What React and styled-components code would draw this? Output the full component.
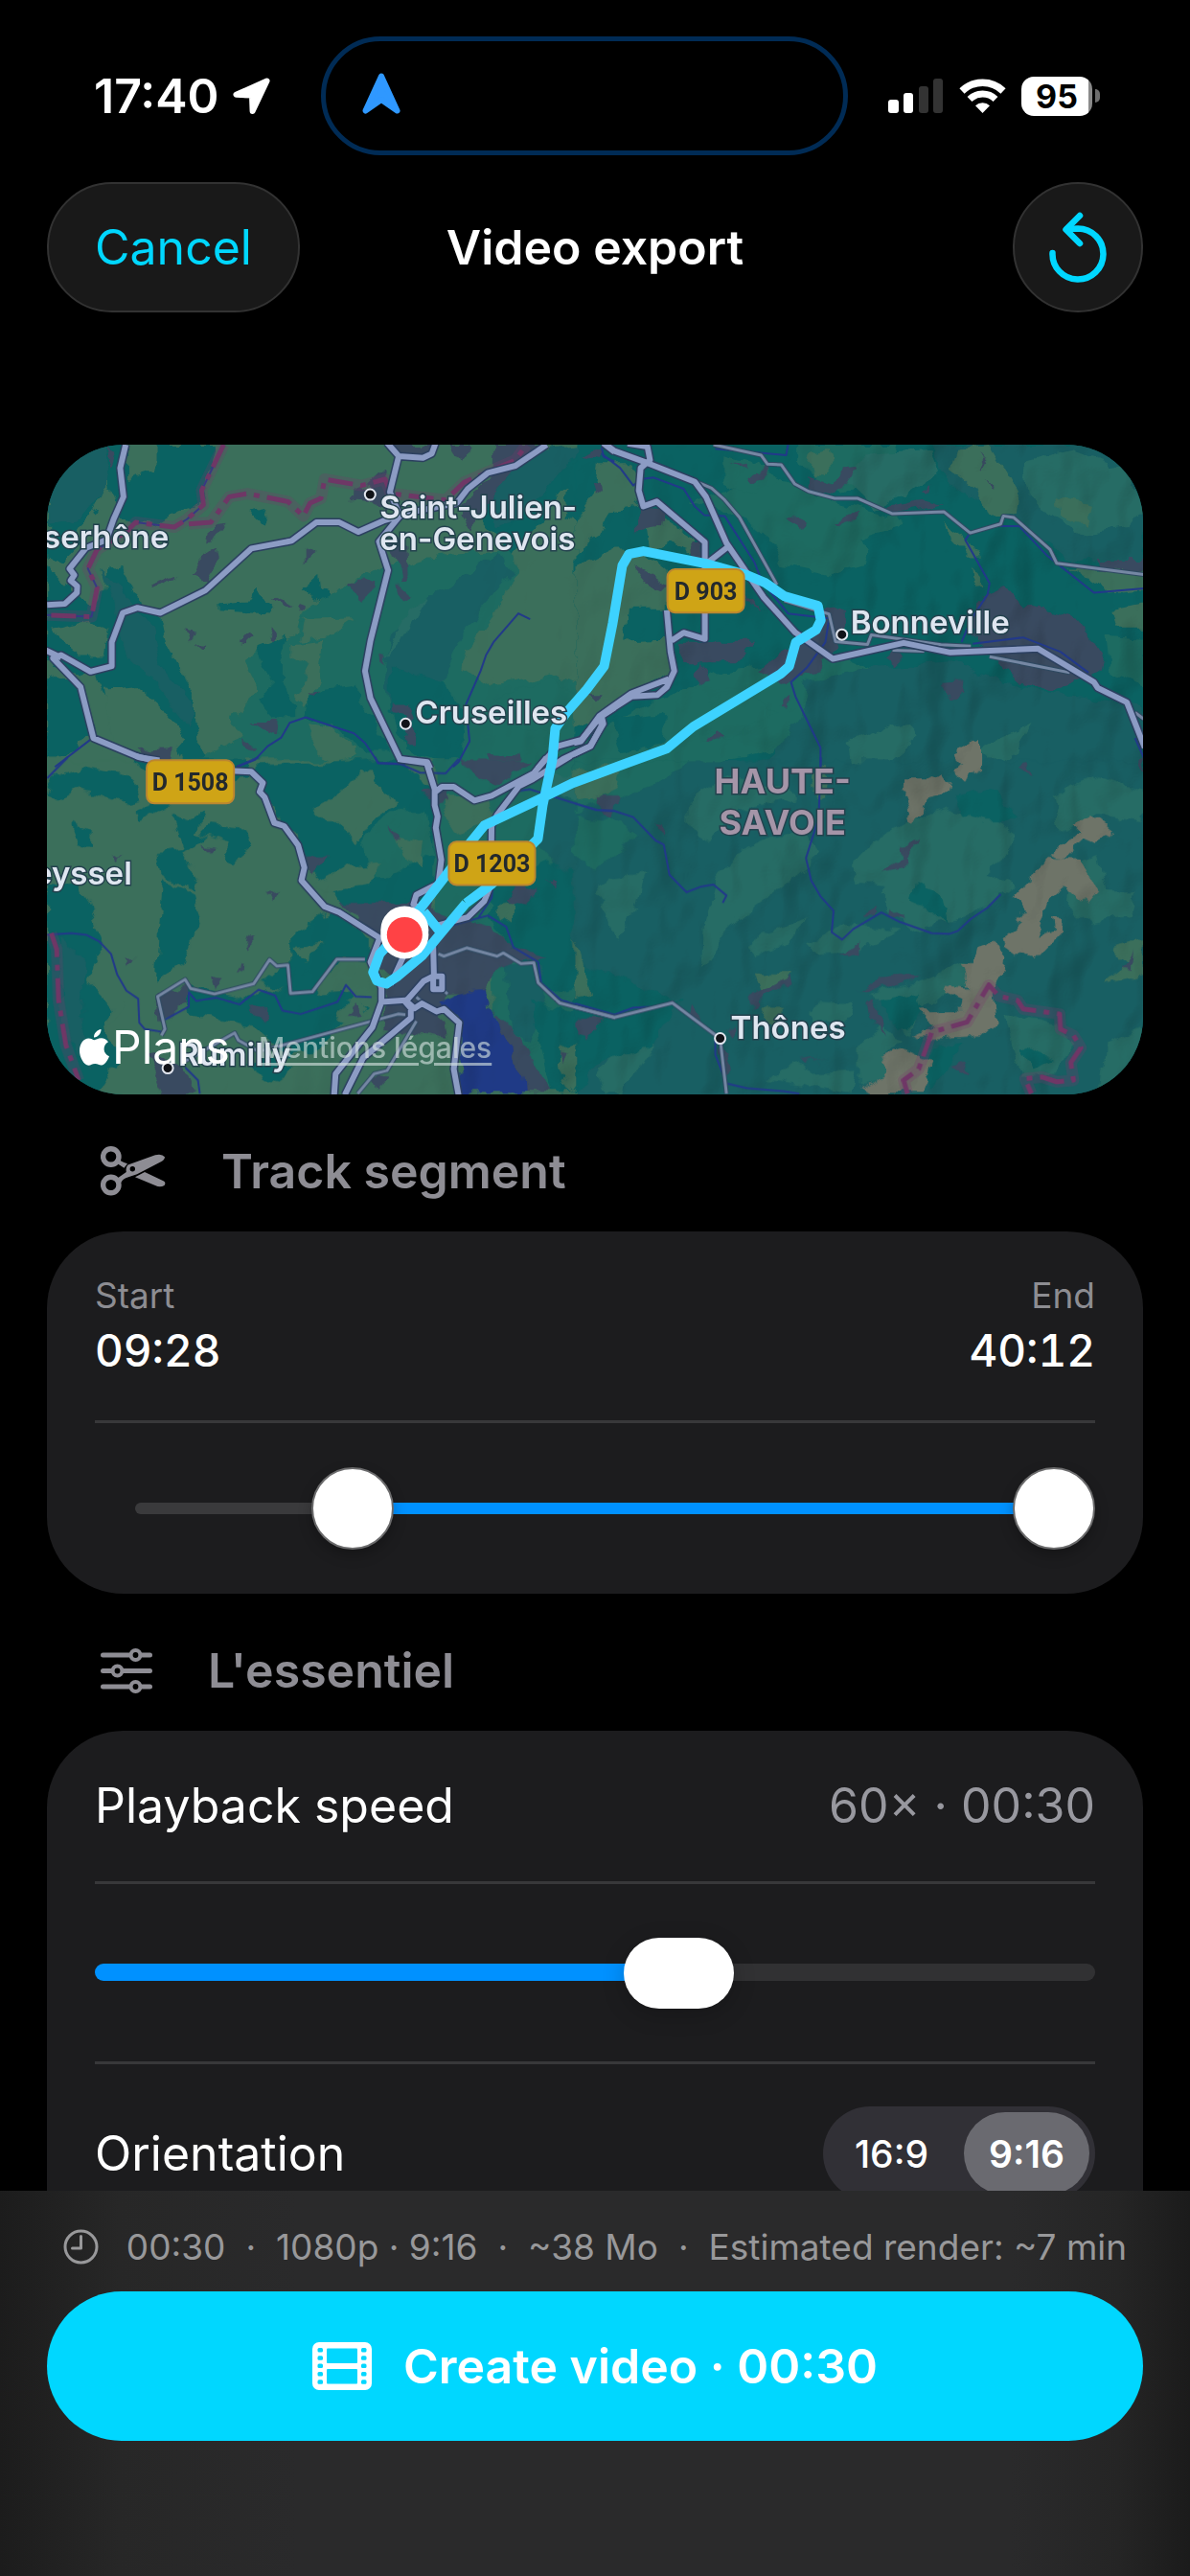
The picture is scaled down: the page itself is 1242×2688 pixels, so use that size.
import { useState } from "react";
import styled, { createGlobalStyle } from "styled-components";

const GlobalStyle = createGlobalStyle`
  * {
    box-sizing: border-box;
  }

  body {
    margin: 0;
    background: #000;
    color: #fff;
    font-family: Inter, "Liberation Sans", sans-serif;
  }

  button,
  input {
    font: inherit;
  }
`;

const Screen = styled.div`
  display: flex;
  flex-direction: column;
  height: 100vh;
  background: #000;
`;

/* ---------- status bar ---------- */

const StatusBar = styled.div`
  display: grid;
  grid-template-columns: 1fr 550px 1fr;
  align-items: center;
  padding: 38px 22px 0 0;
`;

const StatusLeft = styled.div`
  display: flex;
  align-items: center;
  gap: 14px;
  padding-left: 98px;
`;

const Clock = styled.span`
  font-size: 50px;
  line-height: 62px;
  font-weight: 600;
`;

const Island = styled.div`
  display: flex;
  align-items: center;
  height: 124px;
  padding: 0 38px 6px;
  border: 5px solid #002b55;
  border-radius: 62px;
`;

const StatusRight = styled.div`
  display: flex;
  align-items: center;
  gap: 16px;
  padding-left: 42px;
`;

const Battery = styled.div`
  display: flex;
  align-items: center;
  gap: 3px;
`;

const BatteryBody = styled.div`
  width: 74px;
  height: 41px;
  border-radius: 13px;
  background: linear-gradient(to right, #fff 70px, #8a8a8a 70px);
  color: #000;
  font-size: 34px;
  line-height: 41px;
  font-weight: 700;
  text-align: center;
`;

const BatteryNub = styled.div`
  width: 5px;
  height: 14px;
  border-radius: 0 7px 7px 0;
  background: #6d6d6d;
`;

/* ---------- nav bar ---------- */

const NavBar = styled.header`
  display: grid;
  grid-template-columns: 1fr auto 1fr;
  align-items: center;
  padding: 28px 49px 0;
`;

const GlassButton = styled.button`
  display: flex;
  align-items: center;
  justify-content: center;
  justify-self: ${(props) => (props.$end ? "end" : "start")};
  width: ${(props) => (props.$round ? "136px" : "auto")};
  height: 136px;
  padding: ${(props) => (props.$round ? "0" : "0 48px")};
  border: 2px solid #323232;
  border-radius: 68px;
  background: #191919;
  color: #00d7ff;
  font-size: 50px;
  cursor: pointer;
`;

const NavTitle = styled.h1`
  margin: 0;
  font-size: 50px;
  line-height: 62px;
  font-weight: 600;
`;

/* ---------- content ---------- */

const Content = styled.main`
  flex: 1;
  min-height: 0;
  padding: 138px 49px 0;
  overflow-y: auto;
  scrollbar-width: none;
`;

const MapCard = styled.section`
  position: relative;
  overflow: hidden;
  border-radius: 80px;
  background: #0b6262;

  > svg {
    display: block;
    width: 100%;
    height: auto;
  }
`;

const MapCredits = styled.div`
  position: absolute;
  left: 34px;
  bottom: 21px;
  display: flex;
  align-items: center;
  gap: 30px;
`;

const MapBrand = styled.span`
  display: flex;
  align-items: center;
  gap: 3px;
  font-size: 48px;
  line-height: 56px;
`;

const LegalLink = styled.a`
  color: rgba(214, 228, 226, 0.62);
  font-size: 30px;
  line-height: 40px;
  font-weight: 500;
  text-underline-offset: 5px;
`;

const SectionTitle = styled.h2`
  display: flex;
  align-items: center;
  gap: 58px;
  height: 143px;
  margin: 0;
  padding: 18px 56px 0;
  color: #8e8d94;
  font-size: 50px;
  line-height: 62px;
  font-weight: 600;
`;

const Card = styled.section`
  padding: 0 50px;
  border-radius: 80px;
  background: #1c1c1e;

  &:last-child {
    padding-bottom: 80px;
  }
`;

const Row = styled.div`
  display: flex;
  align-items: center;
  justify-content: space-between;
  height: ${(props) => props.$height}px;

  & + & {
    border-top: 3px solid #38383a;
  }
`;

const RowLabel = styled.span`
  font-size: 50px;
  line-height: 62px;
`;

const RowValue = styled.span`
  color: #98989f;
  font-size: 50px;
  line-height: 62px;
`;

const TimeMark = styled.div`
  display: flex;
  flex-direction: column;
  gap: 6px;
  text-align: ${(props) => (props.$end ? "right" : "left")};
`;

const TimeCaption = styled.span`
  color: #8d8d92;
  font-size: 37px;
  line-height: 46px;
`;

const TimeValue = styled.span`
  font-size: 46px;
  line-height: 56px;
  font-weight: 500;
  font-variant-numeric: tabular-nums;
`;

/* ---------- sliders ---------- */

const Dual = styled.div`
  position: relative;
  flex: 1;
  height: 86px;
  padding: 37px 42px;
`;

const DualTrack = styled.div`
  height: 12px;
  border-radius: 6px;
  background: linear-gradient(
    to right,
    #3a3a3c var(--from),
    #0091ff var(--from),
    #0091ff var(--to),
    #3a3a3c var(--to)
  );
`;

const DualInput = styled.input`
  position: absolute;
  inset: 0;
  width: 100%;
  height: 86px;
  margin: 0;
  appearance: none;
  background: transparent;
  pointer-events: none;

  &::-webkit-slider-thumb {
    appearance: none;
    width: 86px;
    height: 86px;
    border: 2px solid #6b6b6c;
    border-radius: 50%;
    background: #fff;
    box-shadow: 0 6px 14px rgba(0, 0, 0, 0.25);
    pointer-events: auto;
  }
`;

const SpeedInput = styled.input`
  flex: 1;
  height: 74px;
  margin: 0;
  appearance: none;
  background: transparent;

  &::-webkit-slider-runnable-track {
    height: 18px;
    border-radius: 9px;
    background: linear-gradient(
      to right,
      #0091ff var(--fill),
      #313133 var(--fill)
    );
  }

  &::-webkit-slider-thumb {
    appearance: none;
    width: 115px;
    height: 74px;
    margin-top: -27px;
    border-radius: 37px;
    background: #fff;
    box-shadow: 0 6px 24px rgba(0, 0, 0, 0.2);
  }
`;

const Segmented = styled.div`
  display: flex;
  gap: 10px;
  height: 98px;
  padding: 6px;
  border-radius: 49px;
  background: #313036;
`;

const Segment = styled.label`
  display: flex;
  align-items: center;
  justify-content: center;
  width: 131px;
  border-radius: 43px;
  font-size: 39px;
  font-weight: 500;

  &:has(input:checked) {
    background: #6a6a70;
    font-weight: 600;
  }

  input {
    position: absolute;
    opacity: 0;
    pointer-events: none;
  }
`;

/* ---------- footer ---------- */

const Footer = styled.footer`
  height: 402px;
  padding: 32px 49px 0;
  background: linear-gradient(
    to right,
    #1c1c1c,
    #272727 10%,
    #2a2a2b 25%,
    #2a2a2b 85%,
    #252525 94%,
    #1b1b1b
  );
`;

const Summary = styled.div`
  display: flex;
  align-items: center;
  justify-content: center;
  gap: 21px;
  height: 53px;
  margin-bottom: 20px;
  color: #98989a;
  font-size: 37px;
  line-height: 46px;
  white-space: nowrap;

  svg {
    margin-right: 8px;
  }
`;

const CreateButton = styled.button`
  display: flex;
  align-items: center;
  justify-content: center;
  gap: 33px;
  width: 100%;
  height: 156px;
  border: none;
  border-radius: 78px;
  background: #00d7ff;
  color: #fff;
  font-size: 50px;
  font-weight: 600;
  cursor: pointer;
`;

/* ---------- icons ---------- */

const LocationIcon = () => (
  <svg width="39" height="39" viewBox="0 0 39 39" aria-hidden="true">
    <path d="M35.5 3.5 3.5 17.8 20 18.6 20.6 35Z" fill="#fff" stroke="#fff" strokeWidth="6" strokeLinejoin="round" />
  </svg>
);

const HeadingIcon = () => (
  <svg width="40" height="43" viewBox="0 0 40 43" aria-hidden="true">
    <path d="M20 3.5 36.5 39.5 20 28 3.5 39.5Z" fill="#2f98ff" stroke="#2f98ff" strokeWidth="6" strokeLinejoin="round" />
  </svg>
);

const SignalIcon = () => (
  <svg width="58" height="36" viewBox="0 0 58 36" aria-hidden="true">
    <rect x="0" y="22" width="11" height="14" rx="3" fill="#fff" />
    <rect x="16" y="15" width="10" height="21" rx="3" fill="#fff" />
    <rect x="32" y="8" width="10" height="28" rx="3" fill="#333" />
    <rect x="47" y="0" width="10" height="36" rx="3" fill="#333" />
  </svg>
);

const WifiIcon = () => (
  <svg width="49" height="36" viewBox="0 0 49 36" fill="none" stroke="#fff" aria-hidden="true">
    <path d="M3 13A31 31 0 0 1 46 13" strokeWidth="7.5" />
    <path d="M11 21.5A19.5 19.5 0 0 1 38 21.5" strokeWidth="7" />
    <path d="M24.5 36 17 28.3A11 11 0 0 1 32 28.3Z" fill="#fff" stroke="none" />
  </svg>
);

const ResetIcon = () => (
  <svg width="60" height="74" viewBox="0 0 60 74" fill="none" stroke="#00d7ff" strokeWidth="6.5" strokeLinecap="round" strokeLinejoin="round" aria-hidden="true">
    <path d="M3.5 43A26.5 26.5 0 1 0 30 17.5L19 18" />
    <path d="M32 4 17.5 18.5 32 33" />
  </svg>
);

const ScissorsIcon = () => (
  <svg width="68" height="52" viewBox="0 0 68 52" fill="currentColor" aria-hidden="true">
    <g fill="none" stroke="currentColor" strokeWidth="5.4">
      <circle cx="10.8" cy="11" r="8.2" />
      <circle cx="10.8" cy="40.5" r="8.2" />
    </g>
    <path d="M19 12.5Q20 16 28 18.2L24.5 22.8 18 18.5Z" />
    <path
      fillRule="evenodd"
      d="M28.5 19.500 57 9.200Q64 7.500 67 11.200 67 14 63.500 16L38 29.200 29 32.300Q23 34 21.500 38L17.500 33.500 26.800 27Q26 22 28.500 19.500ZM36 23.700A2.700 2.700 0 1 0 30.600 23.700 2.700 2.700 0 1 0 36 23.700Z"
    />
    <path d="M36 32.2 46 27 66 36.5Q68.5 38 66.5 41 62 43.5 57 41Z" />
  </svg>
);

const SlidersIcon = () => (
  <svg width="54" height="47" viewBox="0 0 54 47" fill="#000" stroke="currentColor" strokeLinecap="round" aria-hidden="true">
    <path d="M2.5 7H51.5M2.5 23.5H51.5M2.5 40H51.5" strokeWidth="5" />
    <g strokeWidth="4">
      <circle cx="36.5" cy="7" r="4.9" />
      <circle cx="17.5" cy="23.5" r="4.9" />
      <circle cx="36.5" cy="40" r="4.9" />
    </g>
  </svg>
);

const TimeIcon = () => (
  <svg width="37" height="37" viewBox="0 0 37 37" fill="none" stroke="currentColor" strokeWidth="3" strokeLinecap="round" aria-hidden="true">
    <circle cx="18.5" cy="18.5" r="16.5" />
    <path d="M18.5 7.5V20H9.5" strokeLinejoin="round" />
  </svg>
);

const FilmIcon = () => (
  <svg width="62" height="50" viewBox="0 0 62 50" aria-hidden="true">
    <rect width="62" height="50" rx="7" fill="#fff" />
    <g fill="#00d7ff">
      <rect x="15" y="6.5" width="32" height="15.5" rx="1" />
      <rect x="15" y="28" width="32" height="15.5" rx="1" />
      {[6, 14.2, 22.6, 31, 39.3].map((y) => (
        <g key={y}>
          <rect x="5.5" y={y} width="5.5" height="4.5" rx="1.5" />
          <rect x="51" y={y} width="5.5" height="4.5" rx="1.5" />
        </g>
      ))}
    </g>
  </svg>
);

const AppleIcon = () => (
  <svg width="31" height="38" viewBox="0 0 31 38" fill="#fff" aria-hidden="true">
    <path d="M22.500 0C22.800 4 19 8.600 15 8.400 14.600 4.400 18.600.5 22.500 0Z" />
    <path d="M15.500 11.200C17.300 11.200 19.200 9.300 22.700 9.300 25.500 9.300 28.300 10.800 30 13.300 23.500 17 24.500 25.800 31 28.300 29.600 32 26.500 37.500 23 37.600 20.300 37.700 19.400 36 16.200 36 13 36 12 37.600 9.400 37.700 4.800 37.800 0 29.500 0 22.600 0 14.800 4.700 9.500 9.400 9.500 12.200 9.500 14 11.200 15.500 11.200Z" />
  </svg>
);

/* ---------- map ---------- */

const LAND = {
  green: "#3b6f5b",
  teal: "#0a6262",
  mid: "#1d6b61",
  deep: "#185f63",
  light: "#266c65",
  rock: "#6e7468",
  town: "#394a60",
  lake: "#1f3a86",
};

// The map is split in four tiles, each with its own drawing grid.
const TILES = [
  {
    id: "nw",
    transform: "translate(-9 -14) scale(0.3827 0.3333)",
    land: [
      ["green", "0,0 1570,0 1570,1052 0,1052"],
      ["teal", "24,42 240,42 240,200 215,240 190,150 150,260 100,300 110,360 60,420 24,400"],
      ["deep", "24,42 190,42 200,140 150,240 90,280 24,300"],
      ["teal", "240,150 320,120 320,42 480,42 460,150 440,230 390,250 330,290 260,280 210,270"],
      ["teal", "24,420 85,480 100,520 160,560 190,430 230,420 260,520 330,570 350,680 420,820 420,900 470,1050 400,1050 340,900 200,860 150,760 40,740 24,700"],
      ["deep", "170,440 230,500 300,600 330,720 420,850 410,930 330,800 240,700"],
      ["teal", "24,760 100,800 150,950 40,1050 24,1050"],
      ["green", "40,610 140,590 190,620 180,700 110,700 50,640"],
      ["teal", "500,540 570,535 590,500 640,548 630,568 500,558"],
      ["teal", "720,490 760,450 765,500 840,530 850,560 760,530"],
      ["mid", "720,560 860,470 940,420 1000,420 1090,390 1290,370 1300,430 1250,560 1170,680 1160,740 1240,800 1400,760 1568,850 1568,1050 430,1050 480,1000 560,960 530,900 600,810 560,720 620,670 700,640"],
      ["teal", "590,680 680,640 660,720 660,790 700,860 700,900 640,900 600,850 640,790"],
      ["teal", "730,820 860,800 900,880 960,1000 900,1000 800,920 720,900"],
      ["deep", "960,640 1060,520 1130,480 1250,380 1290,440 1200,560 1140,660 1110,780 960,860 940,740"],
      ["teal", "960,740 1110,790 1160,900 1150,1050 1000,1000 960,880"],
      ["green", "690,660 780,650 770,780 720,860 700,830 740,740 690,710"],
      ["green", "720,590 860,585 790,640 710,650"],
      ["green", "740,920 800,930 860,980 870,1020 800,1040 740,980"],
      ["green", "180,800 260,790 340,870 400,960 370,1000 290,990 210,1050 130,1050 200,970"],
      ["teal", "1180,250 1240,150 1380,60 1568,42 1568,260 1540,330 1480,300 1430,270 1440,180 1400,210 1380,280 1290,380 1240,320"],
      ["deep", "1240,100 1380,60 1480,42 1400,160 1330,260 1250,300 1240,200"],
      ["teal", "1510,330 1568,380 1568,540 1480,540"],
      ["mid", "1250,830 1400,770 1500,860 1420,940 1290,930"],
      ["light", "1010,560 1060,520 1000,640 940,720 980,620"],
      ["teal", "1470,590 1540,640 1480,650"],
      ["teal", "580,250 625,240 610,290"],
      ["town", "420,450 440,400 485,365 492,410 460,470"],
      ["town", "300,484 380,452 375,470 305,495"],
      ["town", "845,470 920,470 915,490 885,525 855,500"],
      ["town", "975,480 1015,520 995,535 980,510"],
      ["town", "860,180 900,165 940,120 960,200 945,250 905,225 858,220"],
      ["town", "955,330 1000,340 1005,480 990,480 975,400"],
      ["town", "1150,250 1180,190 1240,130 1240,42 1380,42 1300,110 1250,180 1200,280 1180,310"],
      ["town", "955,42 1080,42 1050,80 985,75"],
      ["town", "545,655 570,622 585,635 560,660"],
      ["town", "640,618 650,640 640,660 628,655"],
      ["town", "400,615 428,625 415,658"],
      ["town", "435,660 465,662 452,677"],
      ["town", "640,518 690,540 660,548"],
      ["town", "725,370 745,385 725,418"],
      ["town", "470,300 500,290 480,330 465,350"],
      ["town", "965,850 1010,850 1030,940 1025,975 995,975 1005,890 965,880"],
      ["town", "575,905 655,905 650,945 610,930"],
      ["town", "270,995 365,990 360,1030 300,1025"],
      ["town", "1220,1010 1310,1015 1290,1050 1250,1050"],
      ["town", "1490,828 1535,820 1515,848"],
      ["town", "1120,42 1175,42 1150,95"],
      ["town", "1480,85 1510,50 1518,85"],
      ["town", "195,50 220,60 205,110"],
      ["town", "705,535 730,545 712,562"],
      ["town", "930,700 945,710 935,740"],
      ["town", "740,815 765,812 750,828"],
      ["town", "555,965 600,995 580,1000"],
    ],
    rivers:
      "M505 42 445 185 450 230 405 275 370 300 265 285 240 315 160 370 135 430 160 490 145 580 24 575M1340 588 1308 570 1240 660 1220 700 1205 750 1165 855 1175 970 1145 1035 1130 1050M45 1050 145 962M540 1050 590 1028 625 985 662 958 685 912 728 895 860 945 890 975 927 1038 1000 1042M1535 50 1540 80 1570 95",
    border:
      "M505 42 445 185 450 230 405 275 370 300 265 285 240 315 160 370 135 430 160 490 145 580 24 575M410 290 470 285 520 205 570 195 680 220 722 265 740 225 770 210 780 150 880 170 945 150 960 195 1110 215 1160 160 1220 130 1300 90 1330 42",
    minor: "",
    roads:
      "M238 42 223 115 232 205 205 275 185 340 130 365 85 430 98 450 88 467 106 485 105 505 72 540 24 543M1385 42 1300 108 1225 130 1170 180 1140 225 1030 250 940 280 872 315 820 285 757 285 690 343 580 367 455 498 332 568 270 552 230 568 200 660 200 735 142 752 62 700 40 710 115 800 150 960 275 1020 330 1030M20 685 62 708M950 36 982 78 958 190 985 265 928 345 953 435 905 655 890 750 905 835 985 1025 1060 1035 1068 1055M982 78 1048 83 1072 70 1082 38M1570 865 1530 895 1480 965 1415 985 1360 1055M1530 895 1535 920 1505 985 1430 1025 1395 1052M1540 38 1570 65",
  },
  {
    id: "ne",
    transform: "translate(551 -14) scale(0.3891 0.3333)",
    land: [
      ["teal", "0,0 1530,0 1530,1052 0,1052"],
      ["green", "60,100 140,100 180,180 160,240 90,250 60,330 0,370 0,280 50,200"],
      ["green", "0,430 100,370 180,370 250,440 245,640 270,740 140,830 60,900 0,930"],
      ["teal", "140,560 245,560 245,650 130,655"],
      ["green", "220,260 320,330 320,380 250,350 200,380 190,300"],
      ["mid", "300,220 400,190 500,140 600,170 700,220 860,265 880,300 760,340 780,420 690,450 560,420 520,340 440,260"],
      ["mid", "600,42 860,42 840,120 720,200 650,160 600,100"],
      ["mid", "400,70 520,110 550,160 480,200 400,160"],
      ["deep", "960,42 1300,42 1523,42 1523,420 1320,400 1180,280 1120,260 1000,160"],
      ["light", "780,70 960,60 980,120 880,200 800,240 720,150"],
      ["green", "1020,60 1110,42 1190,200 1185,260 1100,270 1070,180 1005,120"],
      ["green", "640,70 680,60 690,100 640,150 630,110"],
      ["light", "1200,100 1330,60 1480,120 1523,240 1480,300 1360,320 1280,260 1210,210"],
      ["green", "1290,200 1380,230 1370,290 1300,260"],
      ["green", "990,290 1040,330 1080,400 1060,400 1010,340"],
      ["green", "1065,420 1090,450 1090,490 1070,470"],
      ["mid", "400,750 560,730 700,700 820,760 960,820 860,900 700,940 520,1000 300,1052 0,1052 0,980 200,850"],
      ["deep", "620,780 800,740 1000,720 1200,800 1523,860 1523,1052 500,1052 600,900"],
      ["light", "730,980 850,920 900,910 920,960 820,1052 740,1040"],
      ["light", "1080,990 1220,920 1180,1000 1110,1052"],
      ["mid", "360,850 480,830 540,880 420,960 340,930"],
      ["teal", "100,900 240,880 230,980 120,1010"],
      ["green", "1330,430 1523,430 1523,490 1420,500"],
      ["green", "1440,560 1523,540 1523,620 1450,620"],
      ["mid", "1420,640 1523,650 1523,800 1430,760"],
      ["rock", "1010,1005 1085,962 1085,1052 1020,1052"],
      ["town", "1070,540 1145,480 1200,550 1340,580 1415,690 1400,760 1275,805 1190,790 1110,700 1065,640"],
      ["town", "270,662 480,662 430,720 290,720"],
      ["town", "165,235 235,240 230,300 165,310"],
      ["town", "312,340 345,350 345,410 315,400"],
      ["town", "450,150 525,105 520,130 480,160"],
      ["town", "690,298 755,245 750,275 700,305"],
      ["town", "575,285 595,262 615,275 605,308"],
      ["town", "985,785 1045,780 1040,810 1005,842"],
      ["town", "315,770 335,720 358,790 325,795"],
      ["town", "835,235 930,215 990,235 850,260"],
      ["town", "650,560 720,560 720,640 640,760 570,790 490,750 560,690 640,640"],
      ["town", "615,145 690,170 720,115 755,110 740,140 700,205 625,185"],
      ["town", "350,970 380,935 405,945 365,972"],
      ["town", "1395,405 1523,405 1523,440 1400,430"],
      ["town", "830,710 850,690 875,710 855,732"],
      ["town", "42,170 65,160 68,195 50,215"],
      ["town", "15,80 60,50 55,90"],
      ["town", "1085,75 1100,100 1090,110"],
      ["town", "1100,145 1130,180 1128,195"],
      ["town", "420,100 450,95 450,115"],
      ["town", "150,420 240,480 230,495 185,470"],
      ["town", "440,500 505,560 470,540"],
      ["town", "930,190 955,172 950,195"],
      ["town", "30,825 70,825 50,850"],
      ["town", "575,835 570,862 550,860"],
    ],
    rivers:
      "M70 70 120 115 155 170 175 150 210 145 290 180 320 235 345 262 400 265 480 410 500 470 570 570 680 585M375 55 565 75 570 42M1058 318 1045 340 1110 475 1105 510 1060 590 1035 660M1058 318 1120 297 1190 297 1265 390 1390 505 1523 492M680 585 670 660 620 740 578 785 590 830 657 990 657 1052M1065 665 1200 645 1300 690 1375 755M1500 960 1523 1020",
    border: "",
    minor:
      "M370 42 498 75 515 103 552 105 588 165 625 188 695 210 757 210 850 258 988 252 1058 318 1140 290 1147 265 1175 270 1272 370 1290 413 1523 448M190 90 365 178 400 215 440 270 540 480M560 530 680 572 697 658 783 667 793 637 980 668 1060 672M850 685 935 688M1110 705 1325 755M1500 880 1523 900",
    roads:
      "M75 36 105 62 190 98 320 158 350 205 405 350 505 520 590 630 690 712 880 662 1005 692 1240 680 1390 785 1400 803 1478 848 1526 990M140 38 193 48 200 90 175 115 170 185 182 235 218 220 347 347 347 650 290 630 258 655M405 365 350 415M245 560 255 690 265 750 245 800 220 825 150 830 70 890 75 915 40 985-4 1010M250 775 150 820 65 890 15 970-4 975",
  },
  {
    id: "sw",
    transform: "translate(-9 326) scale(0.3827 0.3333)",
    land: [
      ["green", "0,10 1570,10 1570,1100 0,1100"],
      ["teal", "24,110 40,60 120,30 250,60 270,130 240,140 110,95 60,130"],
      ["teal", "270,10 560,10 570,60 440,80 400,40 300,60"],
      ["teal", "90,205 140,230 138,285 110,275"],
      ["teal", "265,170 340,130 350,160 280,200"],
      ["teal", "360,175 400,200 450,170 430,240 460,250 400,300 440,380 420,420 330,360 320,300 400,290 380,230"],
      ["teal", "470,210 560,220 580,280 530,330 510,310 530,270 440,240"],
      ["teal", "340,380 420,430 440,520 400,640 320,700 330,520"],
      ["teal", "24,400 110,390 150,500 180,600 130,700 200,780 180,850 230,940 160,1052 24,1052"],
      ["deep", "60,560 130,640 120,800 140,980 60,850"],
      ["green", "230,760 330,870 330,1052 170,1052 220,930 190,850"],
      ["teal", "560,30 900,10 980,10 1080,100 1080,400 1060,450 850,470 780,400 730,340 700,240 660,200 620,110"],
      ["green", "750,160 800,130 840,70 910,38 930,80 975,150 900,200 865,270 830,200 780,200"],
      ["mid", "880,250 960,170 1060,170 1080,300 960,370 900,360"],
      ["green", "970,240 1050,270 1040,350 1000,300"],
      ["green", "840,340 940,330 900,400 800,420 740,400"],
      ["teal", "690,560 800,480 900,560 900,640 830,630 780,700 740,760 600,700 690,650"],
      ["green", "700,590 780,580 720,640"],
      ["teal", "400,720 560,760 620,720 720,740 840,730 900,780 830,830 760,920 680,930 600,850 540,830 420,810"],
      ["green", "810,790 870,740 900,800 860,850 820,830"],
      ["teal", "560,960 640,940 700,970 640,1020"],
      ["mid", "1080,10 1570,10 1570,1052 1150,1052 1240,780 1230,560 1080,480"],
      ["teal", "1230,400 1400,320 1568,400 1568,700 1400,740 1300,620 1230,500"],
      ["deep", "1390,120 1568,170 1568,420 1400,330 1350,260"],
      ["deep", "1270,650 1360,640 1380,760 1340,900 1290,850"],
      ["green", "1120,120 1220,120 1240,200 1140,240 1100,180"],
      ["green", "1240,460 1300,450 1300,520 1250,500"],
      ["light", "1380,60 1568,50 1568,140 1420,130"],
      ["teal", "1340,760 1568,820 1568,1052 1400,1052"],
      ["green", "1420,900 1470,890 1480,1000 1450,1052 1420,960"],
      ["light", "1460,560 1500,620 1510,740 1470,740"],
      ["town", "830,455 1000,455 1060,430 1080,480 1230,530 1290,590 1390,620 1290,640 1230,700 1215,735 1110,740 1100,800 1110,880 950,850 940,800 960,700 900,640 920,560"],
      ["town", "1280,450 1300,400 1370,415 1330,460"],
      ["town", "1240,790 1300,860 1400,1052 1325,1052"],
      ["town", "290,920 370,950 400,960 430,1052 340,1052"],
      ["town", "325,740 400,710 410,770 330,830"],
      ["town", "1480,815 1540,815 1500,880 1480,860"],
      ["town", "1150,10 1340,10 1250,90 1200,60"],
      ["town", "230,622 262,620 245,645"],
      ["town", "555,555 578,560 578,595"],
      ["town", "720,310 795,310 740,360"],
      ["town", "540,665 560,648 558,670"],
      ["town", "570,790 620,785 615,820 590,815"],
      ["town", "630,410 655,430 645,450"],
      ["town", "835,803 865,765 890,800"],
      ["town", "900,1000 950,1005 920,1045"],
      ["town", "1420,915 1440,920 1430,960"],
      ["town", "950,220 980,235 985,262"],
      ["town", "440,275 485,280 470,295"],
      ["town", "200,305 225,300 215,320"],
      ["town", "1050,100 1110,90 1120,140 1080,150"],
      ["town", "1390,380 1400,365 1412,380 1400,405"],
      ["town", "470,680 500,685 480,735"],
      ["lake", "1095,765 1150,735 1215,728 1240,800 1290,920 1325,1000 1328,1052 1150,1052 1150,830"],
    ],
    rivers:
      "M24 555 90 550 130 555 165 575 198 615 215 680 240 730 272 755 275 830 290 850 345 860M345 820 410 780 410 735 430 762 485 752 548 773 600 727 645 745 665 792 715 803 815 765 838 712 865 748 908 750M24 65 80 0M540 30 600 0M1110 530 1225 495 1275 530 1295 595 1362 640 1370 705 1425 760 1568 808M1310 105 1340 100 1520 165 1568 168M1238 405 1235 440 1200 500M400 970 435 1010 440 1052M918 0 925 18 985 20 1040 48 1110 50 1145 5",
    border: "M35 550 50 600 55 760 75 900 110 1010",
    minor:
      "M335 870 345 850 325 748 400 695 415 723 480 740 587 708 630 633 650 653 680 650 687 738 747 733 813 632 890 632M1090 615 1105 622 1167 596 1250 622 1267 612 1315 645 1350 642 1362 705 1420 768 1572 815M400 950 535 862 545 885 600 920 700 890 980 803 1000 805M870 1052 915 990 950 980 1030 825M1030 750 1045 765M1100 725 1115 740",
    roads:
      "M535 43 580 45 612 80 603 108 617 125 643 205 670 215 708 275 725 345 717 385 780 467 820 485 930 565 905 640 935 720 935 765 910 845 810 990 806 1056M265-4 330 15M980 5 1058 18 1080 100 1080 150 1088 185 1083 220 1098 320 1090 395 1030 430 1022 460 1050 480M1080 110 1100 92 1132 92 1188 135 1235 120 1350 50 1385 0M1450-4 1345 70 1310 90 1250 180 1235 215 1233 400 1215 450 1170 500 1090 525M1076 590 1078 685 1100 685 1100 725 1076 725 1076 685 1050 700 1000 765 1015 785 1015 815 885 940 835 1056M935 765 1000 760 1025 785 1045 770 1085 795 1105 787 1147 830 1132 975 1145 1056M1000 610 960 710",
  },
  {
    id: "se",
    transform: "translate(551 326) scale(0.3891 0.3333)",
    land: [
      ["deep", "0,10 1530,10 1530,1100 0,1100"],
      ["mid", "0,10 300,10 250,70 160,110 0,170"],
      ["green", "0,40 120,30 110,100 40,140 0,130"],
      ["light", "300,160 340,100 420,60 560,90 600,130 440,160 360,260 300,220"],
      ["light", "370,400 430,300 520,250 620,230 660,300 560,400 460,480 400,560 340,660 345,520"],
      ["light", "50,430 90,370 190,360 160,470 110,580 95,500"],
      ["mid", "0,180 120,190 160,250 60,340 0,320"],
      ["light", "740,340 800,260 880,200 1000,160 1100,180 1180,240 1160,310 1100,360 1180,400 1060,500 900,540 830,480 830,400 750,390"],
      ["teal", "1020,120 1120,100 1180,200 1100,200 1040,180"],
      ["teal", "910,390 980,430 1000,520 960,480 900,450"],
      ["light", "460,580 620,500 600,550 480,630"],
      ["light", "620,590 720,520 860,540 760,610 640,615"],
      ["light", "780,740 920,700 1040,640 1060,710 980,740 920,800 900,880 860,780"],
      ["teal", "820,760 920,740 930,800 900,850 840,820"],
      ["light", "760,900 820,850 880,880 820,940 830,990 760,1030"],
      ["light", "1280,120 1400,60 1523,100 1523,200 1400,180 1300,230"],
      ["light", "1330,330 1400,300 1420,420 1500,420 1480,500 1380,520 1320,470"],
      ["light", "1150,800 1290,830 1330,900 1290,990 1200,1000 1170,900"],
      ["teal", "1190,900 1280,940 1220,980"],
      ["light", "520,1010 580,950 640,990 750,980 740,1052"],
      ["light", "1420,900 1523,840 1523,1052 1400,1052"],
      ["light", "620,800 660,765 740,770 730,820 640,830"],
      ["light", "60,980 170,880 210,900 130,1052 80,1052"],
      ["teal", "0,640 90,680 280,760 200,900 60,960 0,1052"],
      ["green", "0,560 20,640 40,740 0,750"],
      ["green", "480,670 580,675 540,730 500,740"],
      ["green", "490,780 560,780 560,840 510,830"],
      ["green", "1430,590 1523,565 1523,680 1415,710 1480,650"],
      ["green", "630,90 655,20 680,60 665,130"],
      ["teal", "960,900 1040,890 1000,960 950,1040 930,1000"],
      ["rock", "1045,0 1085,0 1085,40 1035,70 1012,40"],
      ["rock", "882,75 940,75 980,48 1005,70 1000,110 945,125 930,180 905,207 880,125"],
      ["rock", "1337,210 1385,183 1437,235 1390,270 1360,255 1310,310 1285,295 1310,260 1357,235"],
      ["rock", "1280,305 1350,312 1402,415 1370,460 1310,400 1270,440 1235,565 1285,540 1280,500 1303,505 1300,545 1230,632 1190,615 1137,570 1195,515 1175,495 1210,480 1165,445 1195,405 1220,400 1220,370"],
      ["rock", "1115,580 1150,610 1140,690 1115,740 1125,830 1090,870 900,885 960,850 925,795 1035,790 1040,760 985,735 990,715 1055,720 1030,650 1070,650 1080,600"],
      ["rock", "875,910 955,950 925,1052 790,1052 760,1035 830,990 815,940"],
      ["town", "62,122 112,122 90,188 68,165"],
      ["town", "820,358 875,310 870,280 925,262 885,310 895,338"],
      ["town", "760,730 830,685 920,680 890,700 810,725"],
      ["town", "780,770 795,755 835,878 800,840"],
      ["town", "470,750 580,685 575,705 470,780"],
      ["town", "10,818 75,818 40,880 10,870"],
      ["town", "710,620 760,582 760,618"],
      ["town", "1000,965 1050,950 1058,992"],
      ["town", "600,950 665,935 605,955"],
      ["town", "840,472 880,510 835,495"],
      ["town", "770,510 805,465 800,500"],
      ["town", "310,765 340,825 305,810"],
      ["town", "385,890 410,975 395,990"],
      ["town", "212,205 235,210 243,258"],
      ["town", "1187,38 1210,25 1220,50"],
      ["town", "1465,660 1490,605 1485,668"],
      ["town", "1507,0 1523,0 1523,60"],
      ["town", "395,860 430,840 420,880"],
    ],
    rivers:
      "M0 145 60 165 103 167 155 187 215 260 237 273 252 367 298 422 335 405 370 398 405 432 395 455M658 0 652 190 618 315 632 385 657 435 692 480 687 547 715 570 745 537 820 485 870 515 955 550 1003 552 1025 543 1060 505 1105 470 1140 428M0 770 105 805 155 783 210 780 260 768 375 870 375 930 405 1020 460 1035 560 1045 600 1052",
    border:
      "M890 1052 880 1010 920 975 955 860 1050 828 1108 712 1135 747 1185 760 1200 787 1298 803 1300 850 1335 870 1355 908 1328 955 1335 1010 1290 1015 1250 1000 1205 1005 1222 1052",
    minor: "M-4 780 105 813 260 768 388 880 405 1052",
    roads: "",
  },
];

const ROUTE =
  "M437 478 464 458 512 411 517 376 527 329 530 296 542 279 563 255 581 231 590 186 600 126 607 114 622 111 687 124 730 136 749 144 769 158 804 168 807 183 802 193 781 206 774 231 765 239 674 294 646 317 602 333 548 353 517 368 456 397 443 413 416 449 389 484 347 531 340 550 344 559 354 562 366 554 391 533 437 478M393 487 410 508";

const TOWNS = [
  { x: 347, y: 77, text: "Saint-Julien-", dot: [337, 52] },
  { x: 347, y: 110, text: "en-Genevois" },
  { x: -4, y: 108, text: "serhône" },
  { x: 384, y: 291, text: "Cruseilles", dot: [374, 291] },
  { x: 838, y: 197, text: "Bonneville", dot: [829, 198] },
  { x: -14, y: 459, text: "eyssel" },
  { x: 713, y: 619, text: "Thônes", dot: [702, 619] },
  { x: 137, y: 647, text: "Rumilly", dot: [126, 650] },
];

const SHIELDS = [
  { x: 646, y: 129, width: 82, text: "D 903" },
  { x: 103, y: 328, width: 93, text: "D 1508" },
  { x: 418, y: 413, width: 92, text: "D 1203" },
];

const Lines = styled.g`
  fill: none;
  stroke: ${(props) => props.$color};
  stroke-width: ${(props) => props.$width}px;
  stroke-linejoin: round;
  stroke-dasharray: ${(props) => props.$dash || "none"};
  opacity: ${(props) => props.$opacity || 1};

  path {
    vector-effect: non-scaling-stroke;
  }
`;

const Relief = styled.g`
  mix-blend-mode: multiply;
`;

const TownLabel = styled.text`
  fill: #dfe6f0;
  stroke: #24424e;
  stroke-width: 3px;
  paint-order: stroke;
  font-size: 33px;
  font-weight: 600;
`;

const RegionLabel = styled(TownLabel)`
  fill: #a595a8;
  font-size: 36px;
  font-weight: 700;
  text-anchor: middle;
`;

const ShieldText = styled.text`
  fill: #23292d;
  font-family: Roboto, sans-serif;
  font-size: 25px;
  font-weight: 700;
  text-anchor: middle;
`;

const MapLines = ({ kind, ...style }) => (
  <Lines {...style}>
    {TILES.filter((tile) => tile[kind]).map((tile) => (
      <path key={tile.id} d={tile[kind]} transform={tile.transform} />
    ))}
  </Lines>
);

const TrackMap = () => (
  <svg viewBox="0 0 1143 677" role="img" aria-label="Track map">
    <defs>
      <filter id="rough" x="0" y="0" width="100%" height="100%" colorInterpolationFilters="sRGB">
        <feTurbulence type="fractalNoise" baseFrequency="0.05" numOctaves="3" seed="4" result="noise" />
        <feDisplacementMap in="SourceGraphic" in2="noise" scale="16" xChannelSelector="R" yChannelSelector="G" />
      </filter>
      <filter id="relief" x="0" y="0" width="100%" height="100%" colorInterpolationFilters="sRGB">
        <feTurbulence type="fractalNoise" baseFrequency="0.014 0.009" numOctaves="3" seed="9" />
        <feDiffuseLighting surfaceScale="26" diffuseConstant="1.3" lightingColor="#fff">
          <feDistantLight azimuth="225" elevation="50" />
        </feDiffuseLighting>
      </filter>
      <linearGradient id="reliefFade" x1="0" y1="0" x2="1" y2="0.3">
        <stop offset="0.4" stopColor="#000" />
        <stop offset="0.75" stopColor="#fff" />
      </linearGradient>
      <mask id="reliefMask">
        <rect width="1143" height="677" fill="url(#reliefFade)" />
      </mask>
    </defs>

    <g filter="url(#rough)">
      {TILES.map((tile) => (
        <g key={tile.id} transform={tile.transform}>
          {tile.land.map(([kind, points]) => (
            <polygon key={points} points={points} fill={LAND[kind]} />
          ))}
        </g>
      ))}
    </g>
    <Relief mask="url(#reliefMask)">
      <rect width="1143" height="677" filter="url(#relief)" opacity="0.16" />
    </Relief>

    <MapLines kind="rivers" $color="#22398a" $width={2} />
    <MapLines kind="border" $color="#7a3a6c" $width={12} $opacity={0.25} />
    <MapLines kind="border" $color="#6f3766" $width={5} $dash="26 8 6 8" />
    <MapLines kind="minor" $color="#2f4a62" $width={5} />
    <MapLines kind="minor" $color="#7587a3" $width={3} />
    <MapLines kind="roads" $color="#2c4060" $width={9} />
    <MapLines kind="roads" $color="#8c9cc4" $width={6} />

    {TOWNS.filter((town) => town.dot).map(({ text, dot }) => (
      <circle key={text} cx={dot[0]} cy={dot[1]} r="5.5" fill="#111318" stroke="#e2e6ee" strokeWidth="2" />
    ))}
    <path d={ROUTE} fill="none" stroke="#3dd2ff" strokeWidth="10" strokeLinejoin="round" />
    {TOWNS.map(({ x, y, text }) => (
      <TownLabel key={text} x={x} y={y}>
        {text}
      </TownLabel>
    ))}
    <RegionLabel x="767" y="364">HAUTE-</RegionLabel>
    <RegionLabel x="767" y="407">SAVOIE</RegionLabel>

    {SHIELDS.map(({ x, y, width, text }) => (
      <g key={text}>
        <rect x={x + 1} y={y + 1} width={width - 2} height="45" rx="8" fill="#cfa416" stroke="#bb8630" strokeWidth="2" />
        <ShieldText x={x + width / 2} y={y + 33}>
          {text}
        </ShieldText>
      </g>
    ))}

    <circle cx="373" cy="506" r="25" fill="#fff" />
    <circle cx="373" cy="511" r="25" fill="#fff" />
    <circle cx="373" cy="511" r="18.5" fill="#ff4245" />
  </svg>
);

const DURATION = 2412;

const formatTime = (seconds) => {
  const minutes = String(Math.floor(seconds / 60)).padStart(2, "0");
  return `${minutes}:${String(seconds % 60).padStart(2, "0")}`;
};

export default function App() {
  const [start, setStart] = useState(568);
  const [end, setEnd] = useState(DURATION);
  const [speed, setSpeed] = useState(594);
  const [orientation, setOrientation] = useState("9:16");

  const percent = (value) => `${(value / DURATION) * 100}%`;

  return (
    <>
      <GlobalStyle />
      <Screen>
        <StatusBar>
          <StatusLeft>
            <Clock>17:40</Clock>
            <LocationIcon />
          </StatusLeft>
          <Island>
            <HeadingIcon />
          </Island>
          <StatusRight>
            <SignalIcon />
            <WifiIcon />
            <Battery>
              <BatteryBody>95</BatteryBody>
              <BatteryNub />
            </Battery>
          </StatusRight>
        </StatusBar>

        <NavBar>
          <GlassButton type="button">Cancel</GlassButton>
          <NavTitle>Video export</NavTitle>
          <GlassButton type="button" $round $end aria-label="Reset">
            <ResetIcon />
          </GlassButton>
        </NavBar>

        <Content>
          <MapCard>
            <TrackMap />
            <MapCredits>
              <MapBrand>
                <AppleIcon />
                Plans
              </MapBrand>
              <LegalLink href="#legal">Mentions légales</LegalLink>
            </MapCredits>
          </MapCard>

          <SectionTitle>
            <ScissorsIcon />
            Track segment
          </SectionTitle>
          <Card>
            <Row $height={197}>
              <TimeMark>
                <TimeCaption>Start</TimeCaption>
                <TimeValue>{formatTime(start)}</TimeValue>
              </TimeMark>
              <TimeMark $end>
                <TimeCaption>End</TimeCaption>
                <TimeValue>{formatTime(end)}</TimeValue>
              </TimeMark>
            </Row>
            <Row $height={181}>
              <Dual>
                <DualTrack style={{ "--from": percent(start), "--to": percent(end) }} />
                <DualInput
                  type="range"
                  aria-label="Start"
                  min="0"
                  max={DURATION}
                  value={start}
                  onChange={(e) => setStart(Math.min(Number(e.target.value), end))}
                />
                <DualInput
                  type="range"
                  aria-label="End"
                  min="0"
                  max={DURATION}
                  value={end}
                  onChange={(e) => setEnd(Math.max(Number(e.target.value), start))}
                />
              </Dual>
            </Row>
          </Card>

          <SectionTitle>
            <SlidersIcon />
            L'essentiel
          </SectionTitle>
          <Card>
            <Row $height={157}>
              <RowLabel>Playback speed</RowLabel>
              <RowValue>60× · 00:30</RowValue>
            </Row>
            <Row $height={188}>
              <SpeedInput
                type="range"
                aria-label="Playback speed"
                min="0"
                max="1000"
                value={speed}
                onChange={(e) => setSpeed(Number(e.target.value))}
                style={{ "--fill": `${speed / 10}%` }}
              />
            </Row>
            <Row $height={190}>
              <RowLabel>Orientation</RowLabel>
              <Segmented role="radiogroup" aria-label="Orientation">
                {["16:9", "9:16"].map((value) => (
                  <Segment key={value}>
                    <input
                      type="radio"
                      name="orientation"
                      checked={orientation === value}
                      onChange={() => setOrientation(value)}
                    />
                    {value}
                  </Segment>
                ))}
              </Segmented>
            </Row>
          </Card>
        </Content>

        <Footer>
          <Summary>
            <TimeIcon />
            <span>00:30</span>
            <span>·</span>
            <span>1080p · 9:16</span>
            <span>·</span>
            <span>~38 Mo</span>
            <span>·</span>
            <span>Estimated render: ~7 min</span>
          </Summary>
          <CreateButton type="button">
            <FilmIcon />
            Create video · 00:30
          </CreateButton>
        </Footer>
      </Screen>
    </>
  );
}
